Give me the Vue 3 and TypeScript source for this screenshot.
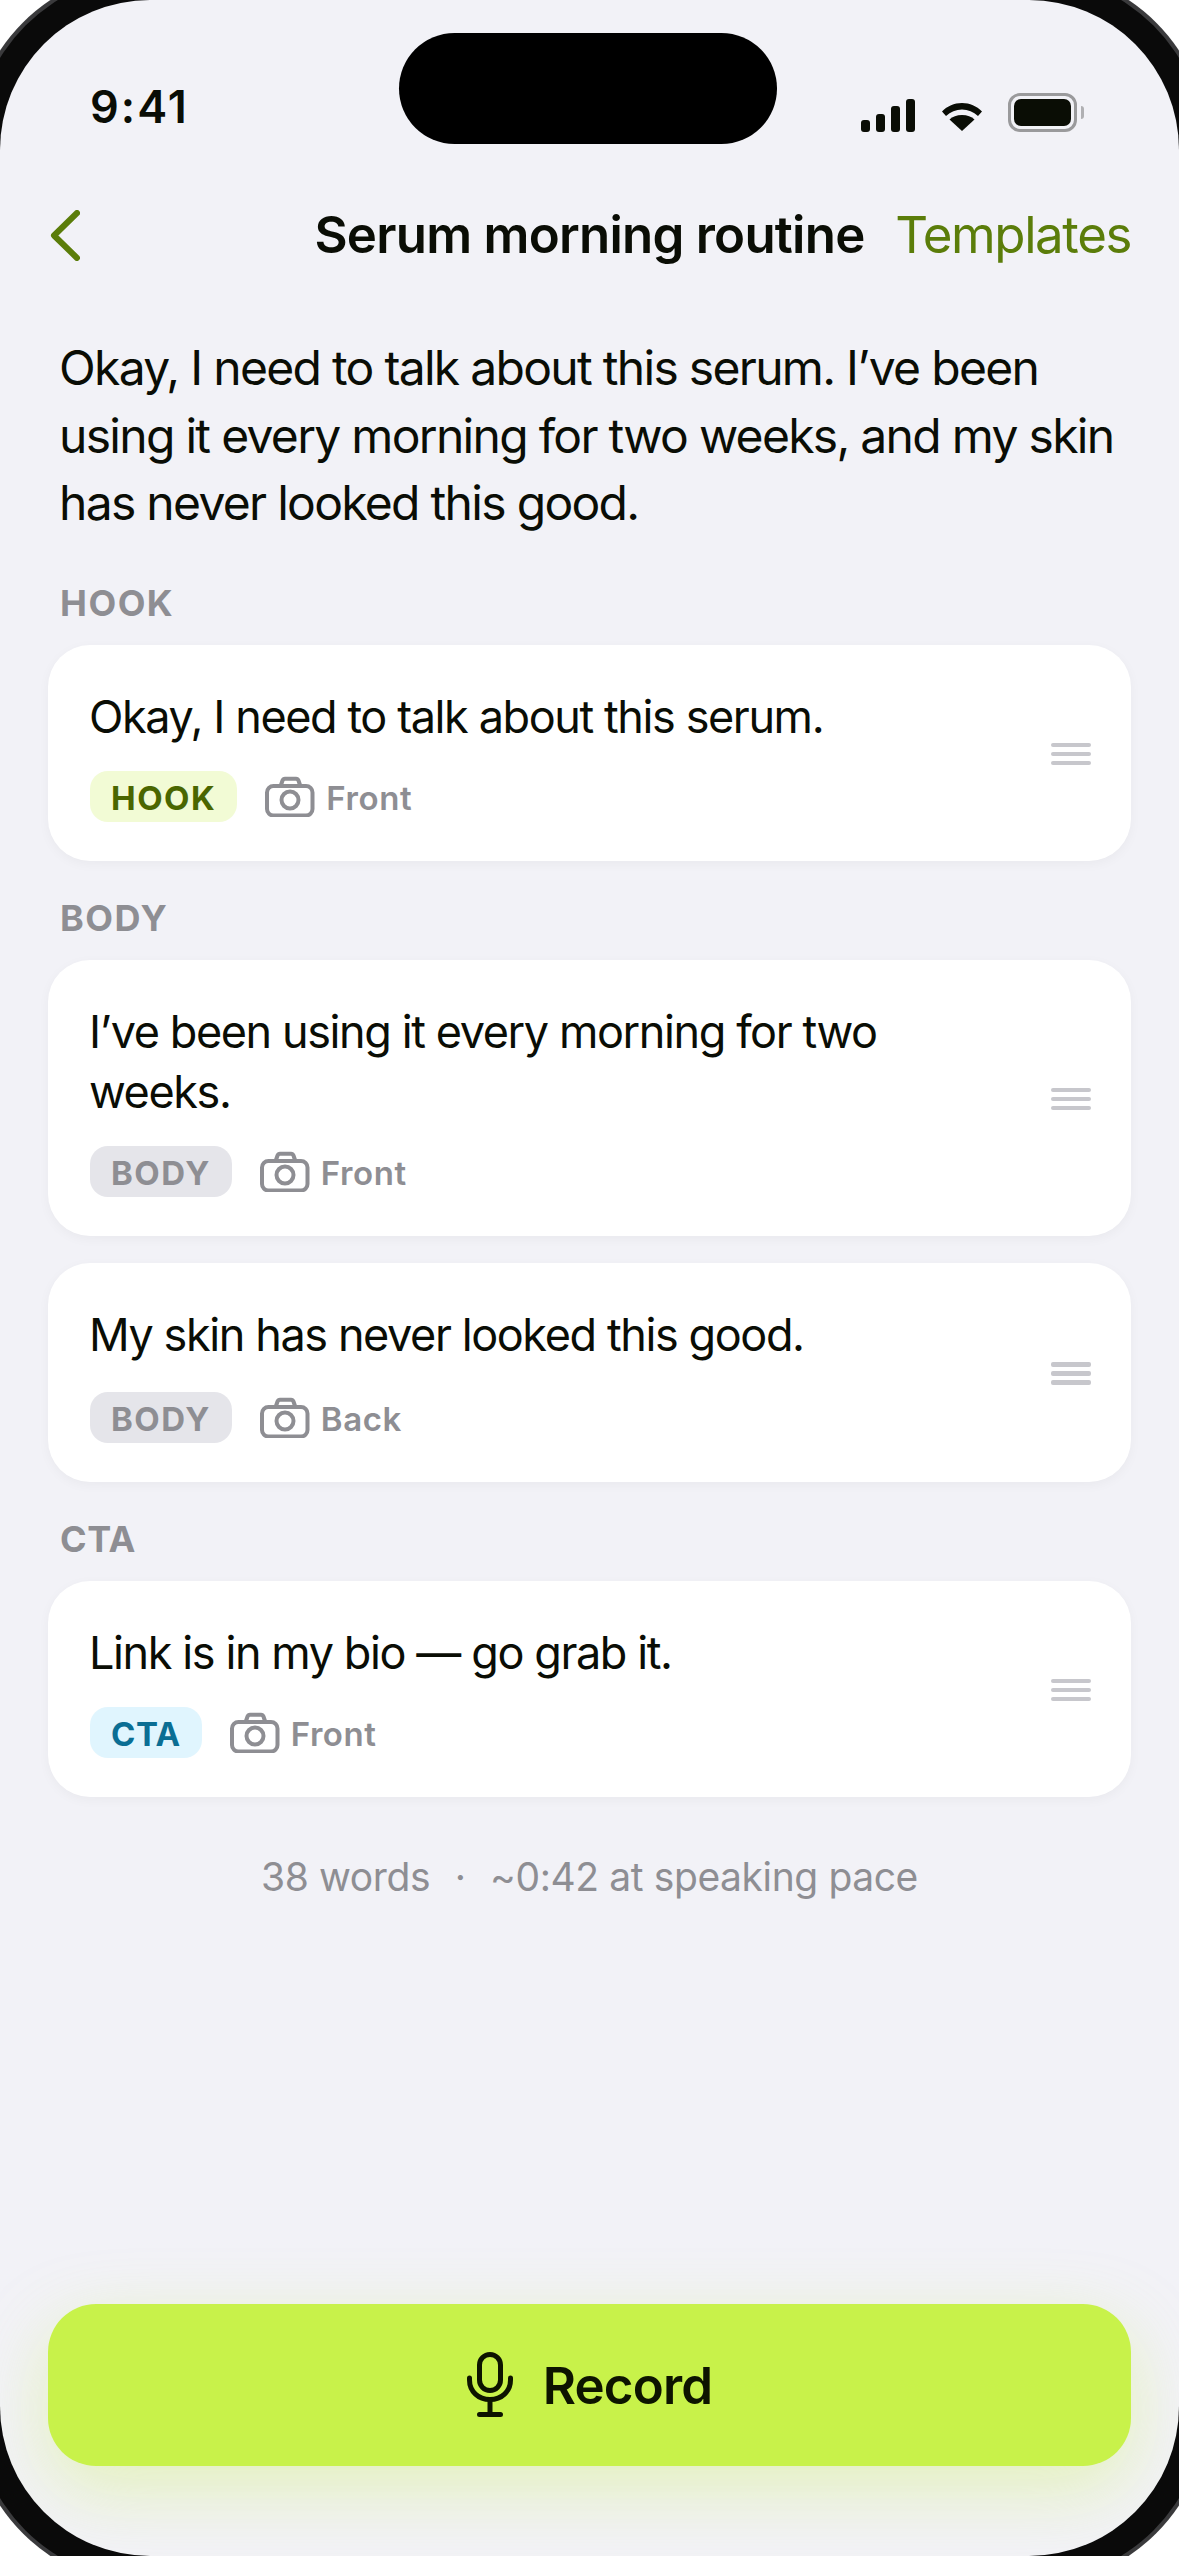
<script setup lang="ts">
interface Clip {
  text: string;
  camera: string;
}

interface Section {
  label: string;
  tag: string;
  clips: Clip[];
}

const sections: Section[] = [
  { label: 'HOOK', tag: 'hook', clips: [{ text: 'Okay, I need to talk about this serum.', camera: 'Front' }] },
  {
    label: 'BODY',
    tag: 'body',
    clips: [
      { text: 'I\u2019ve been using it every morning for two weeks.', camera: 'Front' },
      { text: 'My skin has never looked this good.', camera: 'Back' }
    ]
  },
  { label: 'CTA', tag: 'cta', clips: [{ text: 'Link is in my bio \u2014 go grab it.', camera: 'Front' }] }
];
</script>

<template>
  <div class="page">
    <div class="screen">
      <div class="island"></div>

      <div class="status">
        <span class="time">9:41</span>
        <div class="status-icons">
          <svg class="signal" width="54" height="33" viewBox="0 0 54 33">
            <rect x="0" y="21" width="9" height="12" rx="3" />
            <rect x="15" y="15" width="9" height="18" rx="3" />
            <rect x="30" y="7" width="9" height="26" rx="3" />
            <rect x="45" y="0" width="9" height="33" rx="3" />
          </svg>
          <svg class="wifi" width="40" height="28" viewBox="0 0 40 28">
            <path d="M20 0C12 0 5.500 3 0 8.500L4 13C8.500 8.700 14 6.500 20 6.500S31.500 8.700 36 13L40 8.500C34.500 3 28 0 20 0Z" />
            <path d="M20 12C14.800 12 10.500 13.700 7.500 16.500L20 28L32.500 16.500C29.500 13.700 25.200 12 20 12Z" />
          </svg>
          <div class="battery">
            <div class="battery-body"><div class="battery-fill"></div></div>
            <div class="battery-cap"></div>
          </div>
        </div>
      </div>

      <header class="nav">
        <svg class="back" width="30" height="51" viewBox="0 0 30 51" fill="none">
          <path d="M27 3L4 25.500L27 48" stroke="#5b7d0a" stroke-width="6" stroke-linecap="round" stroke-linejoin="round" />
        </svg>
        <h1 class="title">Serum morning routine</h1>
        <span class="templates">Templates</span>
      </header>

      <p class="script">
        Okay, I need to talk about this serum. I’ve been using it every morning for two weeks, and my skin has never looked this good.
      </p>

      <section v-for="section in sections" :key="section.label" class="section">
        <div class="section-label" :class="section.tag">{{ section.label }}</div>
        <div class="clips">
          <article v-for="clip in section.clips" :key="clip.text" class="card">
            <div class="card-main">
              <div class="card-text">{{ clip.text }}</div>
              <div class="card-meta">
                <span class="chip" :class="section.tag">{{ section.label }}</span>
                <svg class="camera" width="50" height="42" viewBox="0 0 50 42" fill="none" stroke="#8e8e93" stroke-width="4">
                  <rect x="2" y="11" width="45.500" height="29.500" rx="6.500" />
                  <path d="M16 10L17.500 5.500C18 4.300 19 3.750 20 3.750H31C32 3.750 33 4.300 33.500 5.500L35 10" />
                  <circle cx="25" cy="25" r="8.500" />
                </svg>
                <span class="camera-name">{{ clip.camera }}</span>
              </div>
            </div>
            <div class="handle"><i></i><i></i><i></i></div>
          </article>
        </div>
      </section>

      <div class="summary">38 words <span class="dot">·</span> ~0:42 at speaking pace</div>

      <button class="record">
        <svg width="46" height="66" viewBox="0 0 46 66" fill="none" stroke="#0d1400" stroke-width="5" stroke-linecap="round">
          <rect x="12.500" y="2.500" width="21" height="36" rx="10.500" />
          <path d="M2.500 26V28C2.500 39.500 11.500 47.500 23 47.500S43.500 39.500 43.500 28V26" />
          <path d="M23 47.500V62M12.500 62.500H33.500" />
        </svg>
        <span>Record</span>
      </button>
    </div>
  </div>
</template>

<style scoped>
.page {
  width: 1179px;
  height: 2556px;
  background: #ffffff;
  overflow: hidden;
  font-family: Inter, "Liberation Sans", sans-serif;
  color: #0a0d05;
}

.screen {
  position: relative;
  height: 100%;
  display: flex;
  flex-direction: column;
  background: #f2f2f7;
  border-radius: 150px;
  box-shadow: 0 0 0 26px #0a0a0a, 0 0 0 30px #3a3a3c;
  overflow: hidden;
}

.island {
  position: absolute;
  top: 33px;
  left: 399px;
  width: 378px;
  height: 111px;
  border-radius: 56px;
  background: #000000;
}

.status {
  height: 132px;
  flex-shrink: 0;
  display: flex;
  justify-content: space-between;
  align-items: flex-start;
  padding: 80px 95px 0 90px;
  box-sizing: border-box;
}

.time {
  font-size: 45px;
  line-height: 54px;
  font-weight: 600;
  letter-spacing: 2px;
}

.status-icons {
  display: flex;
  align-items: flex-end;
  margin-top: 13px;
}

.signal {
  fill: #0a0d05;
}

.wifi {
  fill: #0a0d05;
  margin-left: 27px;
  margin-bottom: 1px;
}

.battery {
  display: flex;
  align-items: center;
  margin-left: 26px;
}

.battery-body {
  width: 69px;
  height: 39px;
  box-sizing: border-box;
  padding: 3px;
  border: 3px solid #9a9a9c;
  border-radius: 12px;
}

.battery-fill {
  height: 100%;
  border-radius: 7px;
  background: #0a0d05;
}

.battery-cap {
  width: 3px;
  height: 13px;
  margin-left: 4px;
  border-radius: 0 3px 3px 0;
  background: #b0b0b3;
}

.nav {
  display: grid;
  grid-template-columns: 1fr auto 1fr;
  align-items: center;
  height: 72px;
  margin: 67px 48px 0;
  flex-shrink: 0;
}

.back {
  justify-self: start;
  margin-left: 2px;
}

.title {
  margin: 0;
  font-size: 51px;
  line-height: 72px;
  font-weight: 600;
  letter-spacing: -0.750px;
  white-space: nowrap;
}

.templates {
  justify-self: end;
  font-size: 51px;
  line-height: 72px;
  letter-spacing: -1.400px;
  color: #5b7d0a;
}

.script {
  margin: 63px 48px 9px 59px;
  font-size: 48px;
  line-height: 67.500px;
  letter-spacing: -1.700px;
}

.section {
  margin: 0 48px;
}

.section-label {
  margin: 33px 12px 18px;
  font-size: 36px;
  line-height: 48px;
  font-weight: 700;
  letter-spacing: 1.500px;
  color: #8e8e93;
}

.section-label.cta {
  letter-spacing: 0.500px;
}

.clips {
  display: flex;
  flex-direction: column;
  gap: 27px;
}

.card {
  display: flex;
  align-items: center;
  justify-content: space-between;
  padding: 42px 40px 39px 41px;
  border-radius: 42px;
  background: #ffffff;
  box-shadow: 0 3px 12px rgba(0, 0, 0, 0.04);
}

.card-main {
  width: 820px;
}

.card-text {
  font-size: 45px;
  line-height: 60px;
  letter-spacing: -1.400px;
}

.card-meta {
  display: flex;
  align-items: center;
  height: 51px;
  margin-top: 24px;
}

.card:nth-child(2) .card-meta {
  margin-top: 27px;
}

.chip {
  height: 51px;
  box-sizing: border-box;
  margin-left: 1px;
  padding: 2px 21px 0;
  border-radius: 18px;
  font-size: 33px;
  line-height: 51px;
  font-weight: 700;
  letter-spacing: 1.500px;
}

.chip.hook {
  background: #f2fbd5;
  color: #4a6600;
}

.chip.body {
  background: #e5e5ea;
  color: #8e8e93;
}

.chip.cta {
  background: #e0f5fe;
  color: #0a6e94;
  letter-spacing: 0.500px;
}

.camera {
  margin-left: 28px;
}

.camera-name {
  margin-left: 11px;
  padding-top: 4px;
  font-size: 33px;
  font-weight: 600;
  color: #8e8e93;
  letter-spacing: 0.600px;
}

.handle {
  display: flex;
  flex-direction: column;
  gap: 4.500px;
  width: 40px;
}

.handle i {
  display: block;
  height: 4.500px;
  border-radius: 2px;
  background: #c7c7cc;
}

.summary {
  margin-top: 56px;
  text-align: center;
  font-size: 39px;
  line-height: 48px;
  letter-spacing: -0.400px;
  color: #8e8e93;
}

.dot {
  margin: 0 14px;
}

.record {
  display: flex;
  align-items: center;
  justify-content: center;
  gap: 30px;
  height: 162px;
  margin: auto 48px 90px;
  border: none;
  border-radius: 48px;
  background: #c8f24a;
  box-shadow: 0 24px 72px rgba(200, 242, 74, 0.35);
  font-family: inherit;
  font-size: 51px;
  font-weight: 600;
  letter-spacing: -0.800px;
  color: #0d1400;
}
</style>

<style>
html,
body {
  margin: 0;
  background: #ffffff;
}
</style>
